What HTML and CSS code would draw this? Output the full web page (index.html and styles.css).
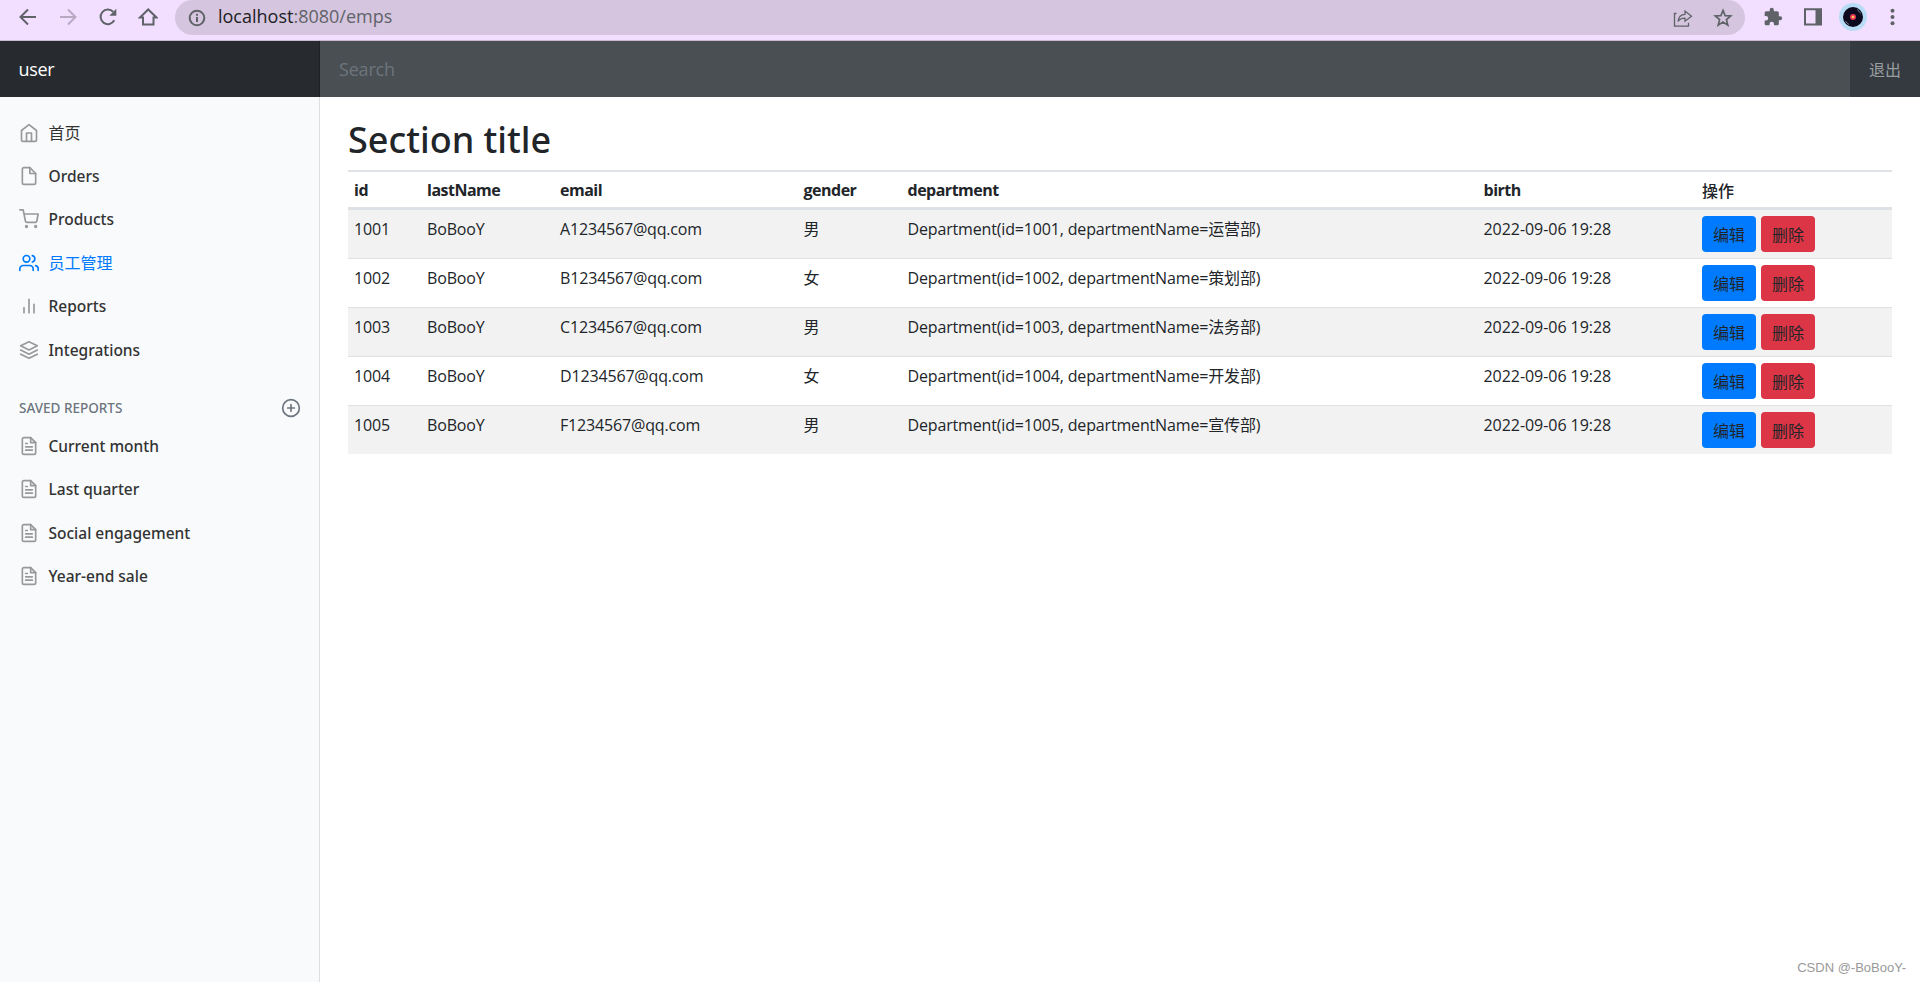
FILE: index.html
```
<!DOCTYPE html>
<html lang="zh-CN">
<head>
    <meta charset="UTF-8">
    <meta name="viewport" content="width=device-width, initial-scale=1.0">
    <title>员工管理</title>
    <link rel="stylesheet" href="styles.css">
</head>
<body>
    <!-- Icons used more than once -->
    <svg class="defs" width="0" height="0">
        <symbol id="file-text" viewBox="0 0 24 24">
            <path d="M14 2H6a2 2 0 0 0-2 2v16a2 2 0 0 0 2 2h12a2 2 0 0 0 2-2V8z"/>
            <path d="M14 2v6h6M16 13H8M16 17H8M10 9H8"/>
        </symbol>
    </svg>

    <div class="browser-bar">
        <div class="browser-nav">
            <svg viewBox="0 0 20 20"><path d="M18 10H3M10 2.500L2.500 10l7.500 7.500"/></svg>
            <svg class="disabled" viewBox="0 0 20 20"><path d="M2 10h15M10 2.500l7.500 7.500-7.500 7.500"/></svg>
            <svg viewBox="0 0 20 20"><path d="M16.300 13.300A7.300 7.300 0 1 1 15.200 4.800"/><path class="fill" d="M18.300 1.700v7h-7z"/></svg>
            <svg viewBox="0 0 20 20"><path d="M2 10.500h3V17.500h10.500v-7h3L10.200 2.500z"/></svg>
        </div>
        <div class="address">
            <svg class="info" viewBox="0 0 20 20"><circle cx="10" cy="10" r="7.300"/><path d="M10 9v5M10 5.800v2"/></svg>
            <span class="url"><b>localhost</b>:8080/emps</span>
            <svg class="share" viewBox="0 0 20 20"><path d="M3.500 5.500H1.500v12.700h14v-3.500M5 13.500c.5-4.500 2.500-7 7-7.200V3l6.500 5.300-6.500 5v-3.200c-3.500 0-5.500 1-7 3.400z"/></svg>
            <svg class="star" viewBox="0 0 20 20"><path d="M10 2.400l2.100 5.200 5.600.4-4.300 3.600 1.400 5.500L10 14.100l-4.800 3 1.400-5.500L2.300 8l5.600-.4z"/></svg>
        </div>
        <div class="browser-tools">
            <svg viewBox="0 0 24 24"><path class="fill" d="M20.500 11H19V7c0-1.100-.9-2-2-2h-4V3.500a2.500 2.500 0 0 0-5 0V5H4c-1.100 0-2 .9-2 2v3.800h1.500a2.700 2.700 0 0 1 0 5.400H2V20c0 1.100.9 2 2 2h3.800v-1.500a2.700 2.700 0 0 1 5.400 0V22H17c1.100 0 2-.9 2-2v-4h1.500a2.500 2.500 0 0 0 0-5z"/></svg>
            <svg viewBox="0 0 20 20"><path d="M2 2.200h16v15.300H2z"/><path class="fill" d="M12.500 2H18v15.500h-5.500z"/></svg>
            <svg class="avatar" viewBox="0 0 28 28"><circle class="ring" cx="14" cy="14" r="14"/><circle class="disc" cx="14" cy="14" r="10"/><path class="shine" d="M18 6.500a9 9 0 0 1 3.500 4M6.500 18a9 9 0 0 0 3.500 3.500"/><circle class="label" cx="14" cy="14" r="3"/><circle class="hole" cx="14" cy="14" r="1.300"/></svg>
            <svg viewBox="0 0 20 20"><g class="fill"><circle cx="9.500" cy="3.800" r="2"/><circle cx="9.500" cy="10" r="2"/><circle cx="9.500" cy="16.200" r="2"/></g></svg>
        </div>
    </div>

    <nav class="navbar">
        <a class="navbar-brand">user</a>
        <input class="search" type="text" placeholder="Search">
        <a class="sign-out">退出</a>
    </nav>

    <div class="page">
        <aside class="sidebar">
            <ul class="nav">
                <li><a class="zh"><svg viewBox="0 0 24 24"><path d="M3 9l9-7 9 7v11a2 2 0 0 1-2 2H5a2 2 0 0 1-2-2z"/><path d="M9 22V12h6v10"/></svg><span>首页</span></a></li>
                <li><a><svg viewBox="0 0 24 24"><path d="M13 2H6a2 2 0 0 0-2 2v16a2 2 0 0 0 2 2h12a2 2 0 0 0 2-2V9z"/><path d="M13 2v7h7"/></svg>Orders</a></li>
                <li><a><svg viewBox="0 0 24 24"><circle cx="9" cy="21" r="1"/><circle cx="20" cy="21" r="1"/><path d="M1 1h4l2.680 13.390a2 2 0 0 0 2 1.610h9.720a2 2 0 0 0 2-1.610L23 6H6"/></svg>Products</a></li>
                <li><a class="zh active"><svg viewBox="0 0 24 24"><path d="M17 21v-2a4 4 0 0 0-4-4H5a4 4 0 0 0-4 4v2"/><circle cx="9" cy="7" r="4"/><path d="M23 21v-2a4 4 0 0 0-3-3.870M16 3.130a4 4 0 0 1 0 7.750"/></svg><span>员工管理</span></a></li>
                <li><a><svg viewBox="0 0 24 24"><path d="M18 20V10M12 20V4M6 20v-6"/></svg>Reports</a></li>
                <li><a><svg viewBox="0 0 24 24"><path d="M12 2L2 7l10 5 10-5-10-5zM2 17l10 5 10-5M2 12l10 5 10-5"/></svg>Integrations</a></li>
            </ul>

            <h6 class="sidebar-heading">
                <span>Saved reports</span>
                <svg viewBox="0 0 24 24"><circle cx="12" cy="12" r="10"/><path d="M12 8v8M8 12h8"/></svg>
            </h6>

            <ul class="nav">
                <li><a><svg><use href="#file-text"/></svg>Current month</a></li>
                <li><a><svg><use href="#file-text"/></svg>Last quarter</a></li>
                <li><a><svg><use href="#file-text"/></svg>Social engagement</a></li>
                <li><a><svg><use href="#file-text"/></svg>Year-end sale</a></li>
            </ul>
        </aside>

        <main>
            <h2>Section title</h2>
            <table class="table">
                <colgroup>
                    <col class="col-id">
                    <col class="col-name">
                    <col class="col-email">
                    <col class="col-gender">
                    <col class="col-department">
                    <col class="col-birth">
                    <col>
                </colgroup>
                <thead>
                    <tr>
                        <th>id</th>
                        <th>lastName</th>
                        <th>email</th>
                        <th>gender</th>
                        <th>department</th>
                        <th>birth</th>
                        <th>操作</th>
                    </tr>
                </thead>
                <tbody>
                    <tr>
                        <td>1001</td>
                        <td>BoBooY</td>
                        <td>A1234567@qq.com</td>
                        <td>男</td>
                        <td>Department(id=1001, departmentName=运营部)</td>
                        <td class="date">2022-09-06 19:28</td>
                        <td><div class="actions"><button class="btn btn-edit">编辑</button><button class="btn btn-delete">删除</button></div></td>
                    </tr>
                    <tr>
                        <td>1002</td>
                        <td>BoBooY</td>
                        <td>B1234567@qq.com</td>
                        <td>女</td>
                        <td>Department(id=1002, departmentName=策划部)</td>
                        <td class="date">2022-09-06 19:28</td>
                        <td><div class="actions"><button class="btn btn-edit">编辑</button><button class="btn btn-delete">删除</button></div></td>
                    </tr>
                    <tr>
                        <td>1003</td>
                        <td>BoBooY</td>
                        <td>C1234567@qq.com</td>
                        <td>男</td>
                        <td>Department(id=1003, departmentName=法务部)</td>
                        <td class="date">2022-09-06 19:28</td>
                        <td><div class="actions"><button class="btn btn-edit">编辑</button><button class="btn btn-delete">删除</button></div></td>
                    </tr>
                    <tr>
                        <td>1004</td>
                        <td>BoBooY</td>
                        <td>D1234567@qq.com</td>
                        <td>女</td>
                        <td>Department(id=1004, departmentName=开发部)</td>
                        <td class="date">2022-09-06 19:28</td>
                        <td><div class="actions"><button class="btn btn-edit">编辑</button><button class="btn btn-delete">删除</button></div></td>
                    </tr>
                    <tr>
                        <td>1005</td>
                        <td>BoBooY</td>
                        <td>F1234567@qq.com</td>
                        <td>男</td>
                        <td>Department(id=1005, departmentName=宣传部)</td>
                        <td class="date">2022-09-06 19:28</td>
                        <td><div class="actions"><button class="btn btn-edit">编辑</button><button class="btn btn-delete">删除</button></div></td>
                    </tr>
                </tbody>
            </table>
        </main>
    </div>

    <div class="watermark">CSDN @-BoBooY-</div>
</body>
</html>
```
FILE: styles.css
```
* {
    box-sizing: border-box;
}
body {
    margin: 0;
    height: 982px;
    display: flex;
    flex-direction: column;
    overflow: hidden;
    font-family: "Open Sans", "Noto Sans CJK SC", sans-serif;
    font-size: 16px;
    color: #212529;
    background: #fff;
}
svg {
    flex: none;
    fill: none;
    stroke: currentColor;
    stroke-width: 2;
    stroke-linecap: round;
    stroke-linejoin: round;
}
.defs {
    position: absolute;
}
.fill {
    fill: currentColor;
    stroke: none;
}

/* Browser toolbar */
.browser-bar {
    flex: none;
    display: flex;
    height: 41px;
    padding: 0 15px 0 17.500px;
    background: #f2dfff;
    border-bottom: 1px solid #c9b9d3;
    color: #5f6368;
}
.browser-bar svg {
    width: 20px;
    height: 20px;
    stroke-linecap: butt;
    stroke-linejoin: miter;
}
.browser-nav {
    display: flex;
    gap: 20px;
    width: 157.500px;
    padding-top: 7px;
}
.browser-nav .disabled {
    color: #b8a9c3;
}
.address {
    flex: 1;
    display: flex;
    align-items: center;
    height: 35px;
    padding: 0 12px;
    border-radius: 18px;
    background: #d5c5df;
}
.address .url {
    flex: 1;
    margin-left: 11px;
    font-size: 18px;
    line-height: 33px;
    height: 35px;
}
.url b {
    font-weight: 400;
    color: #202124;
}
.address .share {
    margin-right: 20px;
    stroke-width: 1.300;
}
.address .star {
    stroke-width: 1.700;
}
.browser-tools {
    display: flex;
    align-items: flex-start;
    width: 160px;
    padding: 7px 0 0 17.500px;
    gap: 20px;
}
.browser-bar .avatar {
    width: 28px;
    height: 28px;
    margin: -4px -4px 0;
    stroke: none;
}
.avatar .ring {
    fill: #b9dcf6;
}
.avatar .disc {
    fill: #0b0a1e;
}
.avatar .shine {
    stroke: #77808a;
    stroke-width: 1;
}
.avatar .label {
    fill: #e8365a;
}
.avatar .hole {
    fill: #ffc94d;
}

/* Top navbar */
.navbar {
    flex: none;
    display: flex;
    height: 56px;
    background: #343a40;
}
.navbar-brand {
    width: 320px;
    padding-left: 18.500px;
    line-height: 57px;
    font-size: 18px;
    letter-spacing: -0.3px;
    color: #fff;
    background: #272b30;
    box-shadow: inset -1px 0 0 #1e2125;
}
.search {
    flex: 1;
    padding: 0 19px;
    border: 0;
    font: inherit;
    font-size: 18px;
    letter-spacing: -0.2px;
    color: #fff;
    background: #494f53;
}
.search::placeholder {
    color: #6c757d;
    opacity: 1;
}
.sign-out {
    width: 70px;
    text-align: center;
    line-height: 59px;
    color: #9a9da0;
}

/* Sidebar */
.page {
    flex: 1;
    display: flex;
}
.sidebar {
    width: 320px;
    padding-top: 14px;
    background: #f8fafc;
    border-right: 1px solid #dddfe1;
}
.nav {
    margin: 0;
    padding: 0;
    list-style: none;
}
.nav a {
    display: flex;
    align-items: center;
    height: 43.400px;
    padding-left: 19px;
    font-family: "Noto Sans", "Noto Sans CJK SC", sans-serif;
    font-size: 15.500px;
    font-weight: 500;
    color: #333;
}
.nav .zh {
    font-size: 16px;
    font-weight: 400;
}
.nav .zh span {
    padding-bottom: 2px;
}
.nav svg {
    width: 20px;
    height: 20px;
    margin-right: 9.500px;
    color: #999;
}
.nav .active,
.nav .active svg {
    color: #007bff;
}
.sidebar-heading {
    display: flex;
    align-items: center;
    justify-content: space-between;
    height: 20px;
    margin: 27px 18px 6px 19px;
    font-family: "Noto Sans", sans-serif;
    font-size: 13.500px;
    font-weight: 500;
    text-transform: uppercase;
    color: #6c757d;
}
.sidebar-heading svg {
    width: 20px;
    height: 20px;
}

/* Content */
main {
    flex: 1;
    padding: 21px 28px 0;
}
h2 {
    height: 44px;
    margin: 0 0 8px;
    font-family: "Noto Sans", sans-serif;
    font-size: 36px;
    line-height: 44px;
    font-weight: 500;
}
.table {
    width: 1544px;
    table-layout: fixed;
    border-collapse: separate;
    border-spacing: 0;
}
.col-id { width: 73px; }
.col-name { width: 133px; }
.col-email { width: 243.500px; }
.col-gender { width: 104px; }
.col-department { width: 576px; }
.col-birth { width: 218.500px; }
.table th {
    height: 40px;
    padding: 0 6px;
    border-top: 2px solid #dee2e6;
    border-bottom: 3px solid #dee2e6;
    text-align: left;
    font-weight: 700;
    letter-spacing: -0.500px;
}
.table th:last-child {
    font-weight: 500;
    letter-spacing: 0;
}
.table td {
    height: 49px;
    padding: 6px;
    border-top: 1px solid #dee2e6;
    vertical-align: top;
    line-height: 27px;
    letter-spacing: -0.160px;
    white-space: nowrap;
}
.table .date {
    letter-spacing: -0.050px;
}
.table tbody tr:first-child td {
    height: 48px;
    border-top: 0;
}
.table tbody tr:nth-child(odd) {
    background: #f2f2f2;
}
.actions {
    display: flex;
    gap: 5px;
}
.btn {
    width: 54px;
    height: 36px;
    padding: 2px 0 0;
    border: 0;
    border-radius: 4px;
    font: inherit;
    color: #212529;
    cursor: pointer;
}
.btn-edit {
    background: #007bff;
}
.btn-delete {
    background: #dc3545;
}

.watermark {
    position: absolute;
    right: 14px;
    bottom: 7px;
    font-family: "Liberation Sans", sans-serif;
    font-size: 13px;
    color: #999;
}
```
